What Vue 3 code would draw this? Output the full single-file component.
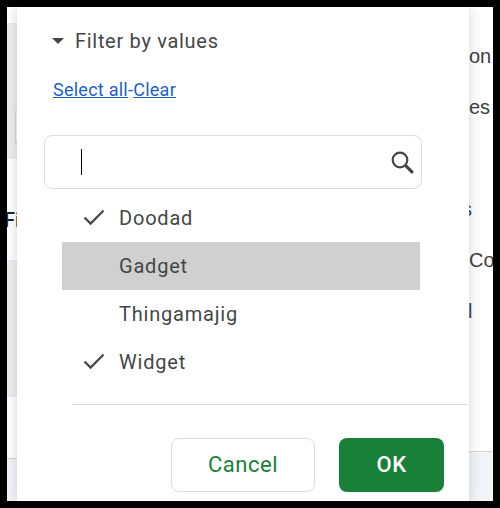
<script setup>
const items = [
  { label: 'Doodad', checked: true },
  { label: 'Gadget', checked: false, hover: true },
  { label: 'Thingamajig', checked: false },
  { label: 'Widget', checked: true }
]
</script>

<template>
  <div class="frame">
    <div class="stage">
      <div class="side-left">
        <div class="band band-one">
          <div class="behind-input"></div>
        </div>
        <div class="fi">Fi</div>
        <div class="band band-two"></div>
        <div class="blank-strip"></div>
        <div class="footer-strip"></div>
      </div>

      <div class="panel">
        <div class="section-head">
          <span class="caret-down"></span>
          <span class="section-title">Filter by values</span>
        </div>
        <div class="links">
          <a class="link">Select all</a><span>-</span><a class="link">Clear</a>
        </div>
        <div class="search">
          <span class="text-cursor"></span>
          <svg class="search-icon" viewBox="0 0 24 24" width="25" height="25">
            <circle cx="9.6" cy="9.6" r="7" fill="none" stroke="#444746" stroke-width="2.1" />
            <path d="M14.8 14.8 L22 22" fill="none" stroke="#444746" stroke-width="3" />
          </svg>
        </div>
        <ul class="values">
          <li v-for="item in items" :key="item.label" class="value" :class="{ hover: item.hover }">
            <svg v-if="item.checked" class="check" viewBox="0 0 22 18" width="22" height="18">
              <path d="M1.5 9.5 L7.6 15.6 L20.5 2.5" fill="none" stroke="#444746" stroke-width="2.2" />
            </svg>
            <span class="value-label">{{ item.label }}</span>
          </li>
        </ul>
        <div class="divider"></div>
        <div class="actions">
          <button class="btn btn-cancel">Cancel</button>
          <button class="btn btn-ok">OK</button>
        </div>
      </div>

      <div class="side-right">
        <div class="cut on">on</div>
        <div class="cut es">es</div>
        <div class="cut s">s</div>
        <div class="cut co">Co</div>
        <div class="cut l">l</div>
        <div class="footer-strip right-foot"></div>
      </div>
    </div>
  </div>
</template>

<style>
html, body {
  margin: 0;
  background: #000;
}
</style>

<style scoped>
.frame {
  width: 500px;
  height: 508px;
  box-sizing: border-box;
  padding: 7px;
  background: #000;
}

.stage {
  display: flex;
  width: 486px;
  height: 494px;
  background: #fff;
  overflow: hidden;
}

.side-left {
  width: 10px;
  flex: none;
  display: flex;
  flex-direction: column;
  overflow: hidden;
}

.band {
  background: #eceef0;
  flex: none;
}

.band-one {
  height: 136px;
  margin-top: 16px;
  padding-top: 85px;
  box-sizing: border-box;
}

.behind-input {
  width: 6px;
  height: 35px;
  margin-left: 8px;
  border: 1px solid #d5d7da;
  border-radius: 4px 0 0 4px;
  background: #f6f7f8;
}

.band-two {
  height: 137px;
}

.fi {
  height: 101px;
  box-sizing: border-box;
  padding-top: 49px;
  margin-left: -3px;
  font: 500 20px/24px "Roboto", sans-serif;
  color: #202124;
}

.blank-strip {
  height: 61px;
  flex: none;
}

.footer-strip {
  flex: 1;
  border-top: 1px solid #d5d6da;
  background: #f2f4f8;
}

.panel {
  width: 452px;
  flex: none;
  position: relative;
  background: #fff;
  box-shadow: 0 0 12px rgba(60, 64, 67, 0.22);
  font-family: "Roboto", sans-serif;
  color: #444746;
}

.section-head {
  display: flex;
  align-items: center;
  height: 24px;
  margin: 22px 0 0 35px;
}

.caret-down {
  width: 0;
  height: 0;
  border-left: 6.5px solid transparent;
  border-right: 6.5px solid transparent;
  border-top: 6.5px solid #444746;
}

.section-title {
  margin-left: 11px;
  font-size: 20px;
  letter-spacing: 0.7px;
}

.links {
  margin: 26px 0 0 36px;
  height: 22px;
  font-size: 18px;
  line-height: 22px;
  letter-spacing: 0.25px;
  color: #1a5fd0;
}

.link {
  text-decoration: underline;
  color: #1a5fd0;
}

.search {
  display: flex;
  align-items: center;
  justify-content: space-between;
  box-sizing: border-box;
  width: 378px;
  height: 54px;
  margin: 34px 0 0 27px;
  padding: 0 6px 0 36px;
  border: 1px solid #dadce0;
  border-radius: 8px;
}

.text-cursor {
  width: 1px;
  height: 26px;
  background: #000;
}

.values {
  list-style: none;
  margin: 5px 0 0 45px;
  padding: 0;
  width: 358px;
}

.value {
  display: flex;
  align-items: center;
  height: 48px;
  position: relative;
  padding-left: 57px;
  font-size: 20px;
  letter-spacing: 0.8px;
}

.value.hover {
  background: #d0d0d0;
}

.check {
  position: absolute;
  left: 21px;
  top: 14px;
}

.divider {
  height: 1px;
  margin: 18px 1px 0 55px;
  background: #dadce0;
}

.actions {
  display: flex;
  margin: 33px 0 0 154px;
  gap: 24px;
}

.btn {
  height: 54px;
  box-sizing: border-box;
  padding: 0 0 2px;
  border-radius: 8px;
  font-family: "Roboto", sans-serif;
  font-size: 22px;
  letter-spacing: 0.5px;
}

.btn-cancel {
  width: 144px;
  background: #fff;
  border: 1px solid #dadce0;
  color: #188038;
  font-weight: 400;
}

.btn-ok {
  width: 105px;
  background: #188038;
  border: none;
  color: #fff;
  font-weight: 500;
}

.side-right {
  width: 24px;
  flex: none;
  display: flex;
  flex-direction: column;
  font: 20px/24px "Liberation Sans", sans-serif;
  color: #3c4043;
  overflow: hidden;
}

.cut {
  height: 24px;
  flex: none;
  white-space: nowrap;
}

.on { margin-top: 37px; }
.es { margin-top: 27px; }
.s { margin-top: 78px; margin-left: -7px; }
.co { margin-top: 27px; }
.l { margin-top: 27px; margin-left: -1px; }

.right-foot {
  margin-top: 128px;
}
</style>
